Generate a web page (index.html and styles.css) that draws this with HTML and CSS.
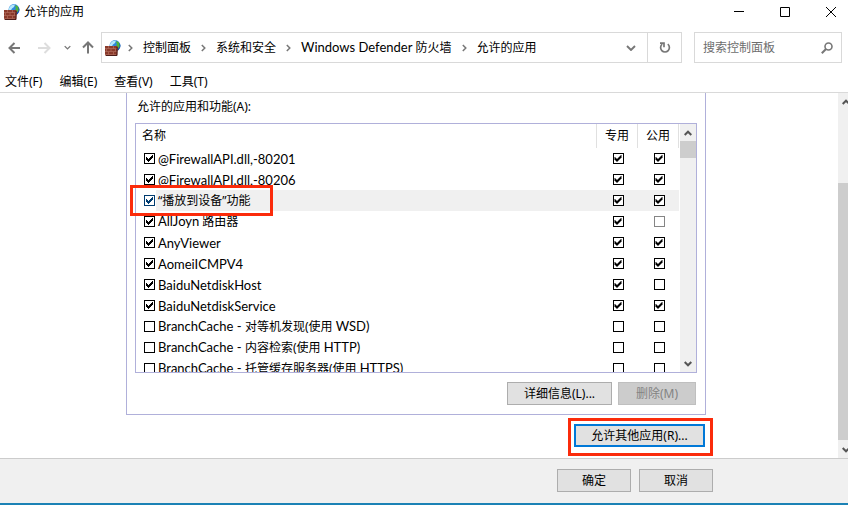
FILE: index.html
```html
<!DOCTYPE html>
<html lang="zh-CN">
<head>
    <meta charset="UTF-8">
    <title>允许的应用</title>
    <link rel="stylesheet" href="styles.css">
</head>
<body>
<svg class="symbols" aria-hidden="true">
    <symbol id="firewall" viewBox="0 0 16 16">
        <circle cx="10" cy="5.500" r="5.400" fill="#2f86dc"/>
        <path d="M5 4C6.500 1.300 9 .3 11 .6L10 3 8 4.500 6.500 7H5z" fill="#b4e8fb"/>
        <path d="M11.500 1l2.500 1.500 1.200 3L14 8l-2 .5-1-2.500 1-2-.8-1.500z" fill="#4fb53c"/>
        <path d="M14.500 3a5.400 5.400 0 0 1-2.500 8l.5-2 2-2z" fill="#1a4fb0"/>
        <path d="M0 6h12l1 1-1 9H1L0 15z" fill="#8a3a2b"/>
        <path d="M0 8.500h12M0 11.500h12M0 14.500h11M3.500 6v2.500M8.500 6v2.500M1.500 9v2.500M6 9v2.500M10.500 9v2.500M3.500 12v2.500M8.500 12v2.500" stroke="#b87565" stroke-width=".6" fill="none"/>
        <path d="M12 7v8.500H1" stroke="#4d1c18" fill="none"/>
    </symbol>
    <symbol id="crumb" viewBox="0 0 5 8"><path d="M.8 1l3 3-3 3" fill="none" stroke="#777" stroke-width="1.500"/></symbol>
    <symbol id="down" viewBox="0 0 10 6"><path d="M1 1l4 4 4-4" fill="none" stroke="currentColor" stroke-width="1.900"/></symbol>
    <symbol id="up" viewBox="0 0 8 6"><path d="M.7 5L4 1.700 7.300 5" fill="none" stroke="#555" stroke-width="2"/></symbol>
    <symbol id="scrolldown" viewBox="0 0 8 6"><path d="M.7 1L4 4.300 7.300 1" fill="none" stroke="#555" stroke-width="2"/></symbol>
</svg>

<header class="titleBar">
    <svg class="appIcon"><use href="#firewall"/></svg>
    <span class="titleText">允许的应用</span>
    <div class="windowButtons">
        <button type="button" aria-label="最小化"><svg viewBox="0 0 10 10"><path d="M0 4.500h10"/></svg></button>
        <button type="button" aria-label="最大化"><svg viewBox="0 0 10 10"><path d="M.5.5h9v9h-9z"/></svg></button>
        <button type="button" aria-label="关闭"><svg viewBox="0 0 10 10"><path d="M0 0l10 10M10 0L0 10"/></svg></button>
    </div>
</header>

<div class="navBar">
    <div class="navButtons">
        <button type="button" aria-label="后退"><svg width="13" height="12" viewBox="0 0 13 12"><path d="M12 6H1.500M6.500 1l-5 5 5 5"/></svg></button>
        <button type="button" aria-label="前进" disabled><svg width="13" height="12" viewBox="0 0 13 12"><path d="M0 6h11.500M6.500 1l5 5-5 5"/></svg></button>
        <button type="button" aria-label="最近的位置"><svg width="7" height="5"><use href="#down"/></svg></button>
        <button type="button" aria-label="上移"><svg width="12" height="13" viewBox="0 0 12 13"><path d="M6 12.500V1.500M1 6.500l5-5 5 5"/></svg></button>
    </div>
    <nav class="addressBar">
        <svg class="appIcon"><use href="#firewall"/></svg>
        <svg class="crumbArrow"><use href="#crumb"/></svg>
        <a href="#">控制面板</a>
        <svg class="crumbArrow"><use href="#crumb"/></svg>
        <a href="#">系统和安全</a>
        <svg class="crumbArrow"><use href="#crumb"/></svg>
        <a href="#"><span class="latin">Windows Defender</span> 防火墙</a>
        <svg class="crumbArrow"><use href="#crumb"/></svg>
        <a href="#">允许的应用</a>
        <button type="button" class="addressDrop" aria-label="历史记录"><svg width="10" height="6"><use href="#down"/></svg></button>
        <button type="button" class="refresh" aria-label="刷新"><svg width="12" height="12" viewBox="0 0 12 12"><path d="M8.800 2.200A4.400 4.400 0 1 1 3.200 2.200M1 1.200h4v4" fill="none" stroke="#777" stroke-width="1.700"/></svg></button>
    </nav>
    <form class="searchBox">
        <input type="text" aria-label="搜索控制面板" placeholder="搜索控制面板">
        <button type="button" aria-label="搜索"><svg width="12" height="12" viewBox="0 0 12 12"><circle cx="7.500" cy="4.500" r="3.500" fill="none" stroke="#777" stroke-width="1.600"/><path d="M5 7L.8 11.200" stroke="#777" stroke-width="2"/></svg></button>
    </form>
</div>

<nav class="menuBar">
    <button type="button">文件(F)</button>
    <button type="button">编辑(E)</button>
    <button type="button">查看(V)</button>
    <button type="button">工具(T)</button>
</nav>

<div class="pageArea">
    <main class="pageContent">
        <section class="group">
            <div class="groupLabel">允许的应用和功能(A):</div>
            <div class="listWrap">
                <div class="listBox">
                    <table class="appTable">
                        <thead>
                        <tr><th class="nameCol">名称</th><th class="netCol">专用</th><th class="netCol">公用</th></tr>
                        </thead>
                        <tbody>
                        <tr>
                            <td><label><input type="checkbox" checked><span class="latin">@FirewallAPI.dll,-80201</span></label></td>
                            <td><input type="checkbox" aria-label="专用" checked></td>
                            <td><input type="checkbox" aria-label="公用" checked></td>
                        </tr>
                        <tr>
                            <td><label><input type="checkbox" checked><span class="latin">@FirewallAPI.dll,-80206</span></label></td>
                            <td><input type="checkbox" aria-label="专用" checked></td>
                            <td><input type="checkbox" aria-label="公用" checked></td>
                        </tr>
                        <tr class="selected">
                            <td><label><input type="checkbox" checked><span>“播放到设备”功能</span></label></td>
                            <td><input type="checkbox" aria-label="专用" checked></td>
                            <td><input type="checkbox" aria-label="公用" checked></td>
                        </tr>
                        <tr>
                            <td><label><input type="checkbox" checked><span><span class="latin">AllJoyn</span> 路由器</span></label></td>
                            <td><input type="checkbox" aria-label="专用" checked></td>
                            <td><input type="checkbox" aria-label="公用" disabled></td>
                        </tr>
                        <tr>
                            <td><label><input type="checkbox" checked><span class="latin">AnyViewer</span></label></td>
                            <td><input type="checkbox" aria-label="专用" checked></td>
                            <td><input type="checkbox" aria-label="公用" checked></td>
                        </tr>
                        <tr>
                            <td><label><input type="checkbox" checked><span class="latin">AomeiICMPV4</span></label></td>
                            <td><input type="checkbox" aria-label="专用" checked></td>
                            <td><input type="checkbox" aria-label="公用" checked></td>
                        </tr>
                        <tr>
                            <td><label><input type="checkbox" checked><span class="latin">BaiduNetdiskHost</span></label></td>
                            <td><input type="checkbox" aria-label="专用" checked></td>
                            <td><input type="checkbox" aria-label="公用"></td>
                        </tr>
                        <tr>
                            <td><label><input type="checkbox" checked><span class="latin">BaiduNetdiskService</span></label></td>
                            <td><input type="checkbox" aria-label="专用" checked></td>
                            <td><input type="checkbox" aria-label="公用" checked></td>
                        </tr>
                        <tr>
                            <td><label><input type="checkbox"><span><span class="latin">BranchCache - </span>对等机发现(使用 <span class="latin">WSD)</span></span></label></td>
                            <td><input type="checkbox" aria-label="专用"></td>
                            <td><input type="checkbox" aria-label="公用"></td>
                        </tr>
                        <tr>
                            <td><label><input type="checkbox"><span><span class="latin">BranchCache - </span>内容检索(使用 <span class="latin">HTTP)</span></span></label></td>
                            <td><input type="checkbox" aria-label="专用"></td>
                            <td><input type="checkbox" aria-label="公用"></td>
                        </tr>
                        <tr>
                            <td><label><input type="checkbox"><span><span class="latin">BranchCache - </span>托管缓存服务器(使用 <span class="latin">HTTPS)</span></span></label></td>
                            <td><input type="checkbox" aria-label="专用"></td>
                            <td><input type="checkbox" aria-label="公用"></td>
                        </tr>
                        </tbody>
                    </table>
                    <div class="listScroll">
                        <svg class="scrollArrow"><use href="#up"/></svg>
                        <div class="listThumb"></div>
                        <svg class="scrollArrow"><use href="#scrolldown"/></svg>
                    </div>
                </div>
                <div class="rowMark"></div>
            </div>
            <div class="groupButtons">
                <button type="button" class="pushButton details">详细信息(L)...</button>
                <button type="button" class="pushButton remove" disabled>删除(M)</button>
            </div>
        </section>
        <div class="allowRow">
            <div class="allowMark">
                <button type="button" class="pushButton allow">允许其他应用(R)...</button>
            </div>
        </div>
    </main>
    <div class="pageScroll">
        <svg class="scrollArrow"><use href="#up"/></svg>
        <div class="pageThumb"></div>
        <svg class="scrollArrow"><use href="#scrolldown"/></svg>
    </div>
</div>

<footer class="bottomBar">
    <button type="button" class="pushButton">确定</button>
    <button type="button" class="pushButton">取消</button>
</footer>
</body>
</html>
```
FILE: styles.css
```css
* {
    box-sizing: border-box;
}
body {
    display: flex;
    flex-direction: column;
    min-height: 100vh;
    margin: 0;
    background-color: #fff;
    color: #000;
    font-family: "Noto Sans", "Noto Sans CJK SC", sans-serif;
    font-size: 12px;
    line-height: 20px;
}
button, input {
    margin: 0;
    padding: 0;
    border: 0;
    background: none;
    color: inherit;
    font: inherit;
}
svg {
    display: block;
    flex: none;
}
a {
    color: inherit;
    text-decoration: none;
}
.symbols {
    position: absolute;
    width: 0;
    height: 0;
}
.latin {
    font-family: Lato, sans-serif;
    font-size: 13px;
}
.appIcon {
    width: 16px;
    height: 16px;
}

/* title */
.titleBar {
    display: flex;
    align-items: center;
    height: 23px;
    padding: 0 9px 0 4px;
}
.titleText {
    margin-left: 4px;
}
.windowButtons {
    display: flex;
    gap: 30px;
    margin-left: auto;
}
.windowButtons button {
    width: 16px;
    height: 16px;
    padding: 3px;
}
.windowButtons svg {
    width: 10px;
    height: 10px;
    fill: none;
    stroke: #000;
}

/* navigation */
.navBar {
    display: flex;
    align-items: center;
    padding: 9px 6px 0 8px;
}
.navButtons {
    display: flex;
    align-items: center;
    width: 93px;
    gap: 14px;
    color: #777;
}
.navButtons button:nth-child(2) {
    margin-left: 3px;
}
.navButtons button:nth-child(3) {
    margin-left: -1px;
}
.navButtons button:nth-child(4) {
    margin-left: -3px;
}
.navButtons path {
    fill: none;
    stroke: #777;
    stroke-width: 2;
}
.navButtons button:disabled path {
    stroke: #ddd;
}
.addressBar {
    display: flex;
    align-items: center;
    flex: 1;
    height: 31px;
    padding-left: 3px;
    border: 1px solid #d9d9d9;
    white-space: nowrap;
}
.crumbArrow {
    width: 5px;
    height: 8px;
    margin: 0 10px;
}
.addressBar .appIcon + .crumbArrow {
    margin-left: 7px;
}
.addressDrop {
    display: flex;
    align-items: center;
    justify-content: center;
    width: 33px;
    height: 100%;
    margin-left: auto;
    color: #777;
}
.refresh {
    display: flex;
    align-items: center;
    justify-content: center;
    width: 34px;
    height: 100%;
    border-left: 1px solid #d9d9d9;
}
.searchBox {
    display: flex;
    align-items: center;
    width: 148px;
    height: 31px;
    margin: 0 0 0 12px;
    padding: 0 8px;
    border: 1px solid #d9d9d9;
}
.searchBox input {
    flex: 1;
    min-width: 0;
    outline: none;
}
.searchBox input::placeholder {
    color: #6d6d6d;
}

.menuBar {
    display: flex;
    gap: 17px;
    height: 30px;
    padding: 9px 5px 0;
    border-bottom: 1px solid #d9d9d9;
}

/* page */
.pageArea {
    display: flex;
    flex: 1;
}
.pageContent {
    flex: 1;
    padding-right: 6px;
}
.group {
    max-width: 580px;
    margin: 0 auto;
    padding: 4px 8px 9px;
    border: 1px solid #b0b0da;
    border-top: 0;
}
.groupLabel {
    padding: 0 2px;
    margin-bottom: 6px;
}
.listWrap {
    position: relative;
}
.listBox {
    display: flex;
    height: 250px;
    overflow: hidden;
    border: 1px solid #b0b0da;
}
.appTable {
    flex: 1;
    align-self: flex-start;
    table-layout: fixed;
    border-collapse: collapse;
}
.appTable th {
    height: 24px;
    padding: 0;
    border-right: 1px solid #e0e0e0;
    font-weight: normal;
    text-align: center;
}
.appTable .nameCol {
    padding-left: 6px;
    text-align: left;
}
.appTable .netCol {
    width: 41px;
}
.appTable td {
    height: 21px;
    padding: 0;
}
.appTable td + td {
    padding-left: 2px;
}
.appTable label {
    display: flex;
    align-items: center;
    height: 21px;
    padding-left: 8px;
}
.appTable label > span {
    padding-left: 3px;
}
.selected td {
    background-color: #f0f0f0;
}
.selected td:first-child {
    background: linear-gradient(to right, #fff 20px, #f0f0f0 20px);
}
input[type="checkbox"] {
    appearance: none;
    display: block;
    flex: none;
    width: 11px;
    height: 11px;
    margin: 0 auto;
    border: 1px solid #000;
    background-color: #fff;
}
label input[type="checkbox"] {
    margin: 0;
}
input[type="checkbox"]:checked::before {
    content: "";
    display: block;
    width: 9px;
    height: 9px;
    background-color: #000;
    clip-path: path("M1 3v3h1v1h1v1h1v-1h1v-1h1v-1h1v-1h1v-3h-1v1h-1v1h-1v1h-1v1h-1v-1h-1v-1z");
}
input[type="checkbox"]:disabled {
    border-color: #858585;
}
.selected label input[type="checkbox"] {
    border-color: #003c70;
}
.selected label input[type="checkbox"]:checked::before {
    background-color: #003c70;
}

.listScroll {
    display: flex;
    flex-direction: column;
    align-items: center;
    width: 17px;
    padding: 6px 0 5px;
    border-left: 1px solid #fff;
    background-color: #f0f0f0;
}
.scrollArrow {
    width: 8px;
    height: 6px;
}
.scrollArrow:last-child {
    margin-top: auto;
}
.listThumb {
    width: 100%;
    height: 17px;
    margin-top: 5px;
    background-color: #cdcdcd;
}

/* red frames */
.rowMark {
    position: absolute;
    top: 62px;
    left: -5px;
    width: 143px;
    height: 31px;
    border: 3px solid #fb2b0b;
}
.allowMark {
    position: relative;
}
.allowMark::after {
    content: "";
    position: absolute;
    top: -6px;
    right: -8px;
    bottom: -9px;
    left: -6px;
    border: 3px solid #fb2b0b;
    pointer-events: none;
}

.pushButton {
    height: 23px;
    border: 1px solid #adadad;
    background-color: #e1e1e1;
    line-height: 20px;
}
.pushButton:disabled {
    border-color: #bfbfbf;
    background-color: #ccc;
    color: #838383;
}
.groupButtons {
    display: flex;
    justify-content: flex-end;
    gap: 6px;
    padding: 9px 1px 0 0;
}
.details {
    width: 105px;
}
.remove {
    width: 78px;
}
.allowRow {
    display: flex;
    justify-content: flex-end;
    max-width: 580px;
    margin: 0 auto;
    padding: 9px 1px 11px 0;
}
.allow {
    display: block;
    width: 131px;
    border: 2px solid #0078d7;
    line-height: 18px;
}

.pageScroll {
    display: flex;
    flex-direction: column;
    width: 10px;
    padding: 6px 0 5px 4px;
    overflow: hidden;
    background-color: #f0f0f0;
}
.pageThumb {
    flex: 1;
    margin: 78px 0 7px -4px;
    background-color: #cdcdcd;
}

/* footer */
.bottomBar {
    display: flex;
    justify-content: flex-end;
    gap: 8px;
    height: 47px;
    padding: 10px 135px 0 0;
    border-top: 1px solid #ccc;
    border-bottom: 2px solid #1b82b5;
    background-color: #f0f0f0;
}
.bottomBar .pushButton {
    width: 74px;
}
```
